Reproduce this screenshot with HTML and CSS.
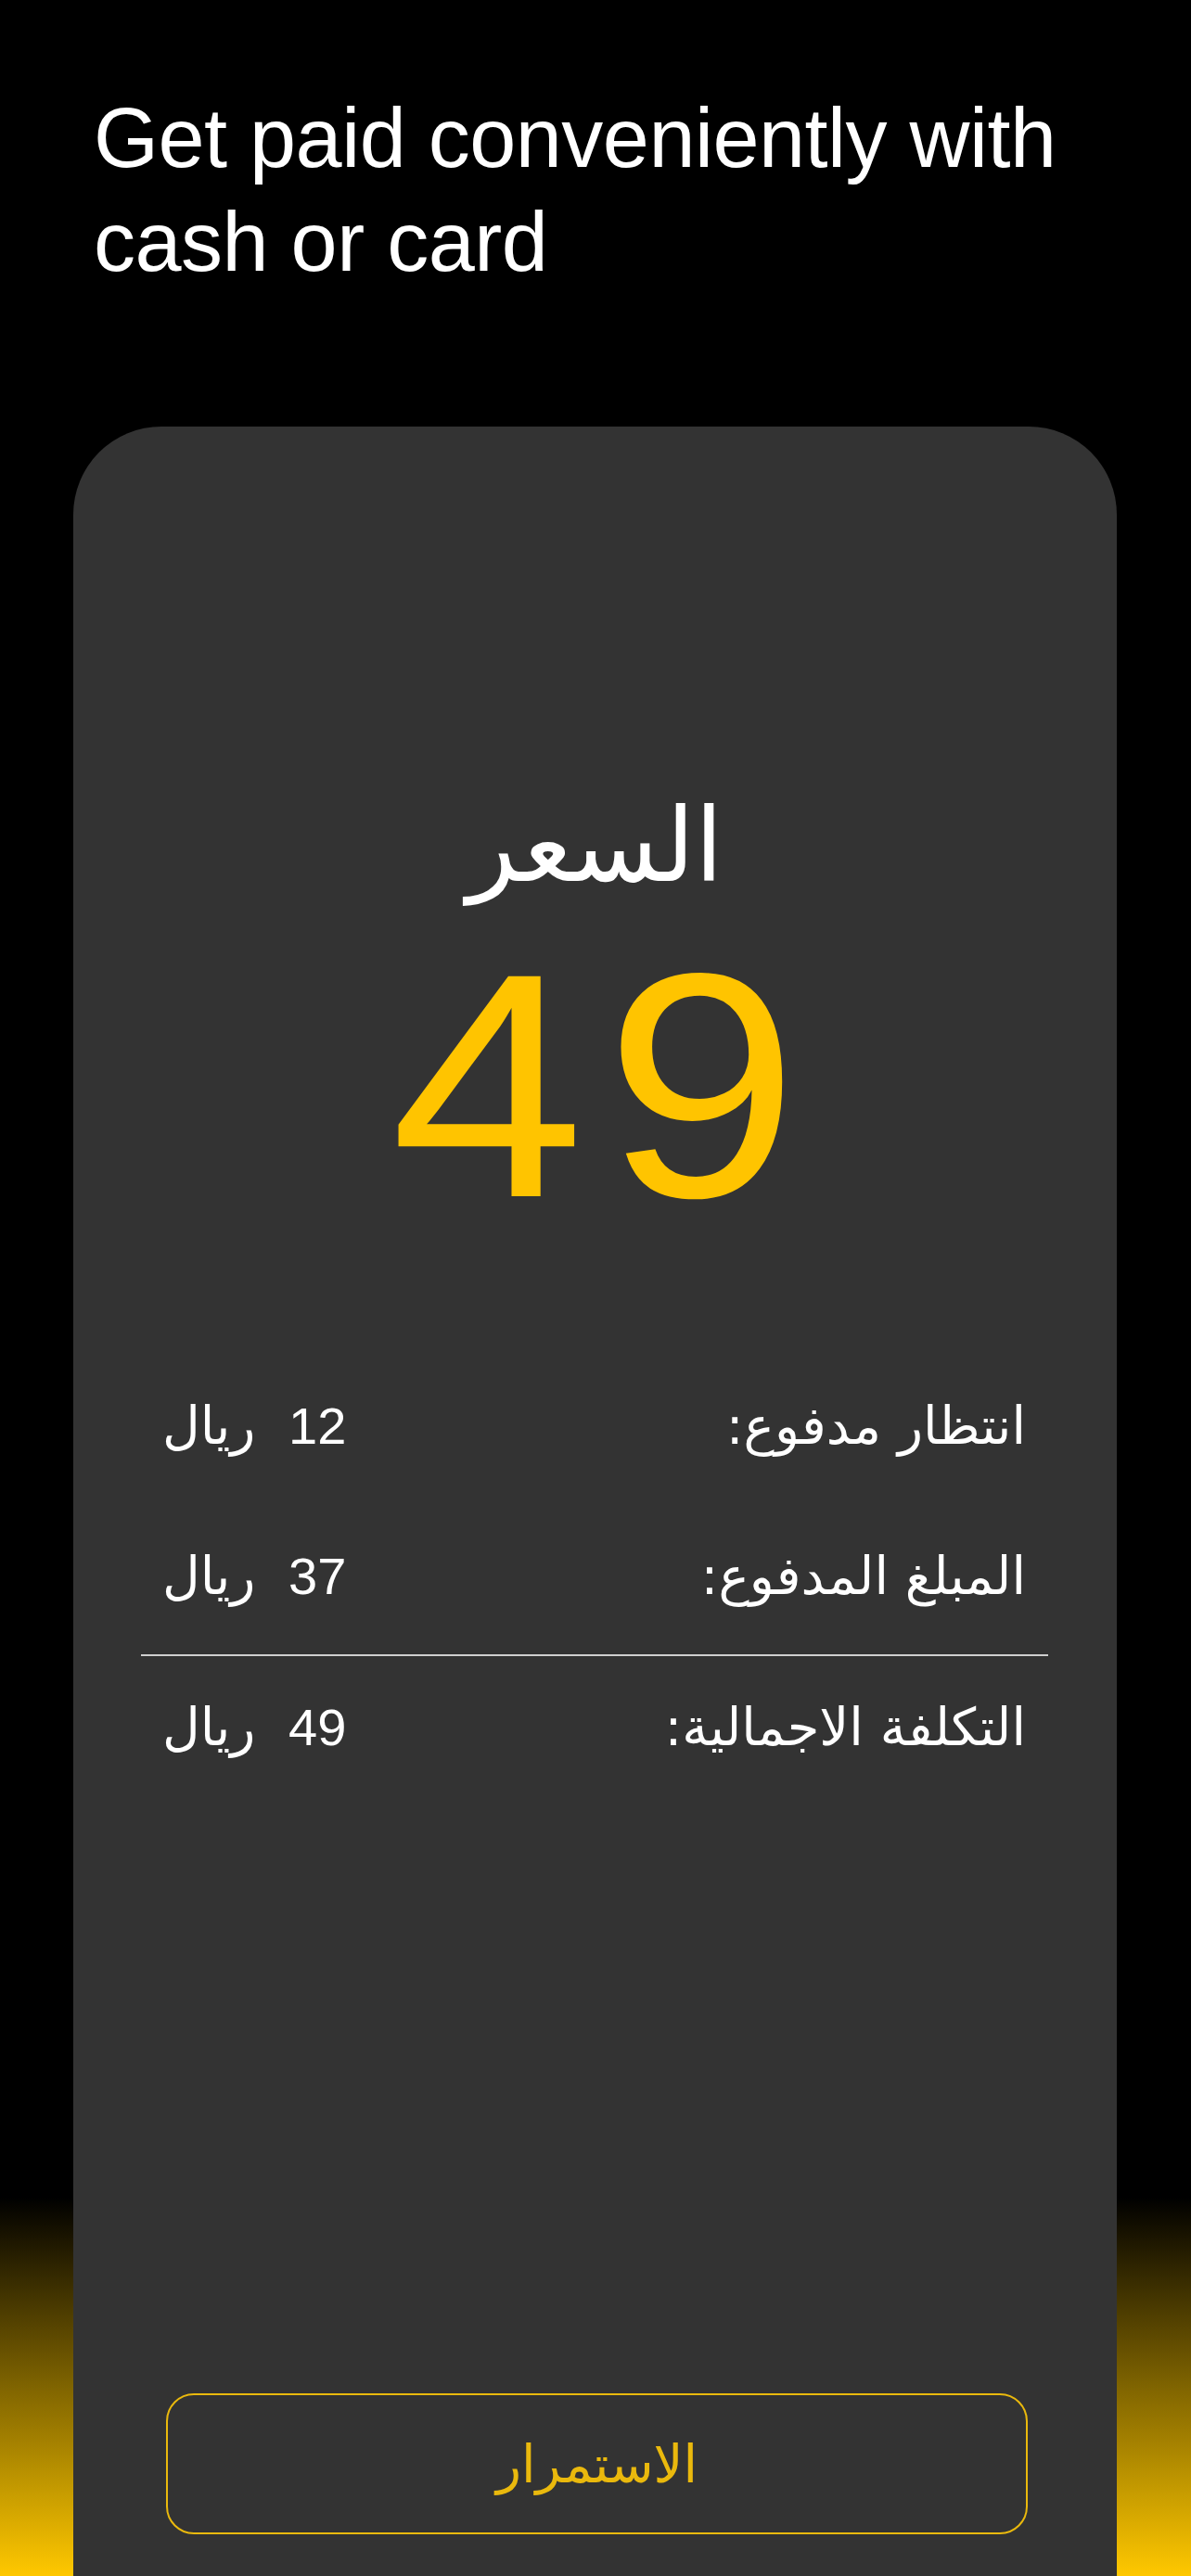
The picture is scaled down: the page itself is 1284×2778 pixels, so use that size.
FILE: index.html
```html
<!DOCTYPE html>
<html lang="en">
<head>
<meta charset="utf-8">
<title>Get paid</title>
<link rel="stylesheet" href="styles.css">
</head>
<body>
<div class="page">
  <h1 class="title">Get paid conveniently with<br>cash or card</h1>
  <div class="card">
    <div class="price-label" dir="rtl">السعر</div>
    <div class="price-value"><span class="digits">49</span></div>
    <div class="rows">
      <div class="row" dir="rtl">
        <span class="label">انتظار مدفوع:</span>
        <span class="value"><span class="num">12</span>&nbsp;&nbsp;<span class="cur">ريال</span></span>
      </div>
      <div class="row row-2" dir="rtl">
        <span class="label">المبلغ المدفوع:</span>
        <span class="value"><span class="num">37</span>&nbsp;&nbsp;<span class="cur">ريال</span></span>
      </div>
      <div class="divider"></div>
      <div class="row" dir="rtl">
        <span class="label">التكلفة الاجمالية:</span>
        <span class="value"><span class="num">49</span>&nbsp;&nbsp;<span class="cur">ريال</span></span>
      </div>
    </div>
    <div class="button" dir="rtl">الاستمرار</div>
  </div>
</div>
</body>
</html>
```

FILE: styles.css
```css
html, body {
  margin: 0;
  padding: 0;
}
body {
  background: #000;
}
.page {
  height: 2778px;
  overflow: hidden;
  background: linear-gradient(to bottom, #000 0, #000 2370px, #ffc800 2778px);
  display: flex;
  flex-direction: column;
}
.title {
  margin: 93px 0 0 101px;
  font-family: "Liberation Sans", Arial, sans-serif;
  font-weight: 400;
  font-size: 90px;
  line-height: 112px;
  letter-spacing: -0.5px;
  color: #fff;
}
.card {
  margin: 143px 80px 0 79px;
  height: 2318px;
  box-sizing: border-box;
  background: #333333;
  border-radius: 95px 95px 0 0;
  padding: 386px 0 45px 0;
  display: flex;
  flex-direction: column;
}
.price-label {
  text-align: center;
  font-family: "DejaVu Sans", sans-serif;
  font-size: 110px;
  line-height: 132px;
  color: #fff;
}
.price-value {
  margin-top: 20px;
  text-align: center;
  font-family: "Liberation Sans", Arial, sans-serif;
  font-size: 345px;
  line-height: 345px;
  color: #ffc400;
}
.digits {
  display: inline-block;
  letter-spacing: 20px;
  margin-right: -20px;
  transform: scaleX(1.09);
}
.rows {
  margin-top: 155px;
  display: flex;
  flex-direction: column;
}
.row {
  display: flex;
  justify-content: space-between;
  align-items: baseline;
  height: 80px;
  line-height: 80px;
  padding: 0 98px 0 96px;
  color: #fff;
}
.row-2 {
  margin-top: 82px;
}
.label {
  font-family: "DejaVu Sans", sans-serif;
  font-size: 56px;
}
.value {
  font-family: "DejaVu Sans", sans-serif;
  font-size: 56px;
}
.num {
  font-family: "Liberation Sans", Arial, sans-serif;
  font-size: 56px;
  letter-spacing: -1px;
}
.cur {
  font-family: "DejaVu Sans", sans-serif;
}
.divider {
  margin: 44px 74px 37px 73px;
  height: 2px;
  background: #cfcfcf;
}
.button {
  margin: auto 96px 0 100px;
  height: 152px;
  box-sizing: border-box;
  border: 2.5px solid #eab90d;
  border-radius: 30px;
  display: flex;
  align-items: center;
  justify-content: center;
  font-family: "DejaVu Sans", sans-serif;
  font-size: 56px;
  color: #eab90d;
}
```
